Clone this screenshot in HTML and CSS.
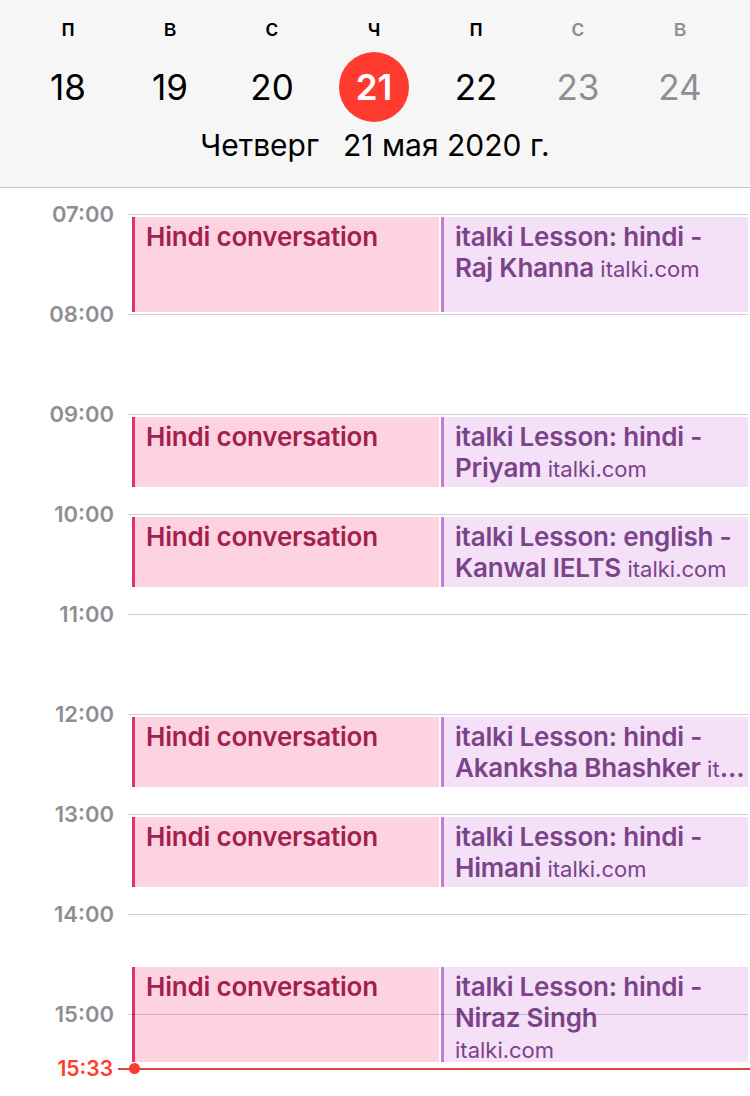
FILE: index.html
```html
<!DOCTYPE html>
<html lang="ru">
<head>
    <meta charset="UTF-8">
    <meta name="viewport" content="width=device-width, initial-scale=1.0">
    <title>Календарь</title>
    <link rel="stylesheet" href="styles.css">
</head>
<body>
<div class="page">

    <div class="header">
        <div class="week">
            <div class="day"><span class="wd">п</span><span class="num">18</span></div>
            <div class="day"><span class="wd">в</span><span class="num">19</span></div>
            <div class="day"><span class="wd">с</span><span class="num">20</span></div>
            <div class="day"><span class="wd">ч</span><span class="num today">21</span></div>
            <div class="day"><span class="wd">п</span><span class="num">22</span></div>
            <div class="day weekend"><span class="wd">с</span><span class="num">23</span></div>
            <div class="day weekend"><span class="wd">в</span><span class="num">24</span></div>
        </div>
        <div class="date"><span>Четверг</span><span>21 мая 2020 г.</span></div>
    </div>

    <div class="timeline">
        <div class="grid">
            <div class="hour"><span class="label">07:00</span><span class="line"></span></div>
            <div class="hour"><span class="label">08:00</span><span class="line"></span></div>
            <div class="hour"><span class="label">09:00</span><span class="line"></span></div>
            <div class="hour"><span class="label">10:00</span><span class="line"></span></div>
            <div class="hour"><span class="label">11:00</span><span class="line"></span></div>
            <div class="hour"><span class="label">12:00</span><span class="line"></span></div>
            <div class="hour"><span class="label">13:00</span><span class="line"></span></div>
            <div class="hour"><span class="label">14:00</span><span class="line"></span></div>
            <div class="hour"><span class="label">15:00</span><span class="line"></span></div>

            <!-- 07:00 - 08:00 -->
            <div class="ev hindi" style="top:3px;height:95px">
                <div class="ln">Hindi conversation</div>
            </div>
            <div class="ev lesson" style="top:3px;height:95px">
                <div class="ln">italki Lesson: hindi -</div>
                <div class="ln">Raj Khanna <span class="loc">italki.com</span></div>
            </div>

            <!-- 09:00 - 09:45 -->
            <div class="ev hindi" style="top:203px;height:70px">
                <div class="ln">Hindi conversation</div>
            </div>
            <div class="ev lesson" style="top:203px;height:70px">
                <div class="ln">italki Lesson: hindi -</div>
                <div class="ln">Priyam <span class="loc">italki.com</span></div>
            </div>

            <!-- 10:00 - 10:45 -->
            <div class="ev hindi" style="top:303px;height:70px">
                <div class="ln">Hindi conversation</div>
            </div>
            <div class="ev lesson" style="top:303px;height:70px">
                <div class="ln">italki Lesson: english -</div>
                <div class="ln">Kanwal IELTS <span class="loc">italki.com</span></div>
            </div>

            <!-- 12:00 - 12:45 -->
            <div class="ev hindi" style="top:503px;height:70px">
                <div class="ln">Hindi conversation</div>
            </div>
            <div class="ev lesson" style="top:503px;height:70px">
                <div class="ln">italki Lesson: hindi -</div>
                <div class="ln">Akanksha Bhashker <span class="loc">italki.com</span></div>
            </div>

            <!-- 13:00 - 13:45 -->
            <div class="ev hindi" style="top:603px;height:70px">
                <div class="ln">Hindi conversation</div>
            </div>
            <div class="ev lesson" style="top:603px;height:70px">
                <div class="ln">italki Lesson: hindi -</div>
                <div class="ln">Himani <span class="loc">italki.com</span></div>
            </div>

            <!-- 14:30 - 15:30 -->
            <div class="ev hindi" style="top:753px;height:95px">
                <div class="ln">Hindi conversation</div>
            </div>
            <div class="ev lesson" style="top:753px;height:95px">
                <div class="ln">italki Lesson: hindi -</div>
                <div class="ln">Niraz Singh</div>
                <div class="ln"><span class="loc">italki.com</span></div>
            </div>

            <!-- current time 15:33 -->
            <div class="now" style="top:855px">
                <span class="now-label">15:33</span>
                <span class="now-dot"></span>
            </div>
        </div>
    </div>

</div>
</body>
</html>
```

FILE: styles.css
```css
html, body {
    margin: 0;
    padding: 0;
    background: #fff;
}
body {
    font-family: Inter, "Noto Sans", sans-serif;
    color: #000;
}
.page {
    width: 750px;
    height: 1096px;
    overflow: hidden;
}

/* Header with week strip */
.header {
    height: 188px;
    box-sizing: border-box;
    padding-top: 16px;
    background: #f6f6f7;
    border-bottom: 1px solid #c6c6c8;
}
.week {
    display: grid;
    grid-template-columns: repeat(7, 102px);
    padding-left: 17px;
}
.day {
    display: flex;
    flex-direction: column;
    align-items: center;
}
.wd {
    font-size: 23px;
    line-height: 24px;
    font-weight: 500;
}
.num {
    margin-top: 12px;
    width: 70px;
    height: 70px;
    border-radius: 50%;
    display: flex;
    align-items: center;
    justify-content: center;
    font-size: 35px;
    font-weight: 400;
}
.num.today {
    background: #ff3b30;
    color: #fff;
    font-weight: 600;
}
.weekend {
    color: #8e8e93;
}
.date {
    margin-top: 6px;
    display: flex;
    justify-content: center;
    gap: 24px;
    font-size: 30px;
    line-height: 34px;
}

/* Day timeline */
.timeline {
    padding-top: 26px;
}
.grid {
    position: relative;
}
.hour {
    display: flex;
    align-items: flex-start;
    height: 100px;
}
.label {
    width: 114px;
    margin-top: -12px;
    line-height: 24px;
    text-align: right;
    font-size: 22px;
    font-weight: 600;
    color: #8e8e93;
}
.line {
    position: relative;
    z-index: 2;
    flex: 1;
    margin-left: 14px;
    margin-right: 2px;
    border-top: 1px solid rgba(0, 0, 0, 0.19);
}

/* Events */
.ev {
    position: absolute;
    box-sizing: border-box;
    overflow: hidden;
    padding: 4px 2px 0 11px;
    font-size: 26px;
    line-height: 31px;
    font-weight: 600;
    letter-spacing: -0.2px;
}
.ev .ln {
    white-space: nowrap;
    overflow: hidden;
    text-overflow: ellipsis;
}
.hindi {
    left: 132px;
    width: 307px;
    background: #fdd3df;
    border-left: 3px solid #e0336d;
    color: #a21f50;
}
.lesson {
    left: 441px;
    width: 307px;
    background: #f4e0f7;
    border-left: 3px solid #c07dd3;
    color: #7b4389;
}
.loc {
    font-weight: 400;
    font-size: 22px;
    letter-spacing: 0;
}

/* Current time indicator */
.now {
    position: absolute;
    left: 0;
    right: 0;
    z-index: 3;
    height: 0;
}
.now::after {
    content: "";
    position: absolute;
    left: 118px;
    right: 0;
    top: -1px;
    height: 2px;
    background: #d8463d;
}
.now-label {
    position: absolute;
    right: 637px;
    top: -12px;
    line-height: 24px;
    font-size: 21px;
    font-weight: 600;
    color: #ff3b30;
}
.now-dot {
    position: absolute;
    left: 129px;
    top: -6px;
    width: 11px;
    height: 11px;
    border-radius: 50%;
    background: #ff3b30;
    z-index: 1;
}
```
